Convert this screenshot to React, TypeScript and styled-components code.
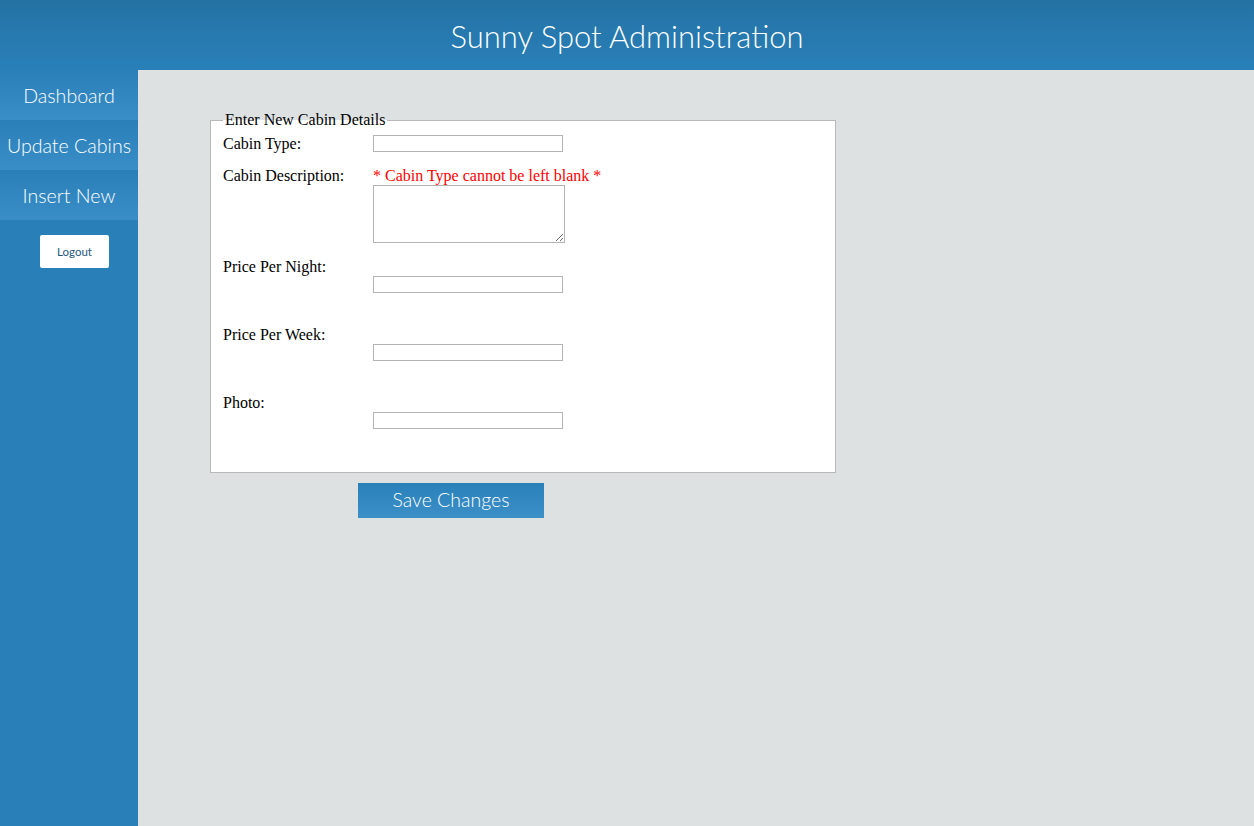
import React from "react";
import styled, { createGlobalStyle } from "styled-components";

const GlobalStyle = createGlobalStyle`
  html, body { margin: 0; padding: 0; }
  body {
    background: #dee1e2;
    font-family: "Liberation Serif", "Times New Roman", serif;
    font-size: 16px;
    color: #000;
  }
`;

const Page = styled.div`
  display: flex;
  flex-direction: column;
  min-height: 826px;
`;

const Header = styled.header`
  height: 70px;
  display: flex;
  align-items: center;
  justify-content: center;
  background: linear-gradient(to bottom, #2472a4, #2980b9);
`;

const Title = styled.h1`
  margin: 0;
  font-family: Lato, "Open Sans", sans-serif;
  font-weight: 300;
  font-size: 31px;
  color: #ffffff;
  padding-top: 1px;
`;

const Body = styled.div`
  flex: 1;
  display: flex;
`;

const Sidebar = styled.nav`
  width: 138px;
  flex-shrink: 0;
  background: #2980b9;
  display: flex;
  flex-direction: column;
  align-items: stretch;
`;

const NavItem = styled.a`
  height: 50px;
  display: flex;
  align-items: center;
  justify-content: center;
  background: linear-gradient(to bottom, #2a7fb9, #3a8ec7);
  font-family: Lato, "Open Sans", sans-serif;
  font-weight: 300;
  font-size: 19.6px;
  color: #ffffff;
  text-decoration: none;
  white-space: nowrap;
`;

const LogoutButton = styled.button`
  margin: 15px 0 0 40px;
  width: 69px;
  height: 33px;
  background: #ffffff;
  border: none;
  border-radius: 2px;
  font-family: Lato, "Open Sans", sans-serif;
  font-weight: 400;
  font-size: 11.5px;
  color: #26587e;
  padding: 0;
  cursor: pointer;
`;

const Main = styled.main`
  flex: 1;
  padding: 41px 0 0 72px;
`;

const Fieldset = styled.fieldset`
  width: 600px;
  margin: 0;
  padding: 6px 12px 10px 12px;
  border: 1px solid #b8b8b8;
  background: #ffffff;
`;

const Legend = styled.legend`
  padding: 0 2px;
  font-size: 16px;
  line-height: 18px;
`;

const Row = styled.div<{ $tail?: boolean; $tight?: boolean }>`
  display: grid;
  grid-template-columns: 150px 1fr;
  margin-bottom: ${(p) => (p.$tight ? "14px" : "15px")};
  padding-bottom: ${(p) => (p.$tail ? "18px" : "0")};
`;

const Label = styled.label`
  line-height: 18px;
  font-size: 16px;
`;

const Field = styled.div`
  display: flex;
  flex-direction: column;
  align-items: flex-start;
`;

const ErrorText = styled.span`
  color: #ff0000;
  line-height: 18px;
  min-height: 18px;
  font-size: 16px;
`;

const TextInput = styled.input`
  box-sizing: border-box;
  width: 190px;
  height: 17px;
  margin: 0;
  padding: 0 2px;
  border: 1px solid #b3b3b3;
  background: #fff;
  font-size: 12px;
`;

const TextArea = styled.textarea`
  box-sizing: border-box;
  width: 192px;
  height: 58px;
  margin: 0;
  padding: 2px;
  border: 1px solid #b3b3b3;
  background: #fff;
  font-size: 12px;
`;

const SaveButton = styled.button`
  margin: 10px 0 0 148px;
  width: 186px;
  height: 35px;
  border: none;
  padding: 0 0 2px 0;
  background: linear-gradient(to bottom, #2a80b9, #3c90c8);
  font-family: Lato, "Open Sans", sans-serif;
  font-weight: 300;
  font-size: 19.5px;
  color: #ffffff;
  cursor: pointer;
`;

export default function App() {
  return (
    <>
      <GlobalStyle />
      <Page>
        <Header>
          <Title>Sunny Spot Administration</Title>
        </Header>
        <Body>
          <Sidebar>
            <NavItem href="#">Dashboard</NavItem>
            <NavItem href="#">Update Cabins</NavItem>
            <NavItem href="#">Insert New</NavItem>
            <LogoutButton>Logout</LogoutButton>
          </Sidebar>
          <Main>
            <form onSubmit={(e) => e.preventDefault()}>
              <Fieldset>
                <Legend>Enter New Cabin Details</Legend>
                <Row $tight>
                  <Label>Cabin Type:</Label>
                  <Field>
                    <TextInput type="text" />
                  </Field>
                </Row>
                <Row>
                  <Label>Cabin Description:</Label>
                  <Field>
                    <ErrorText>* Cabin Type cannot be left blank *</ErrorText>
                    <TextArea />
                  </Field>
                </Row>
                <Row $tail>
                  <Label>Price Per Night:</Label>
                  <Field>
                    <ErrorText />
                    <TextInput type="text" />
                  </Field>
                </Row>
                <Row $tail>
                  <Label>Price Per Week:</Label>
                  <Field>
                    <ErrorText />
                    <TextInput type="text" />
                  </Field>
                </Row>
                <Row $tail>
                  <Label>Photo:</Label>
                  <Field>
                    <ErrorText />
                    <TextInput type="text" />
                  </Field>
                </Row>
              </Fieldset>
              <SaveButton type="submit">Save Changes</SaveButton>
            </form>
          </Main>
        </Body>
      </Page>
    </>
  );
}
